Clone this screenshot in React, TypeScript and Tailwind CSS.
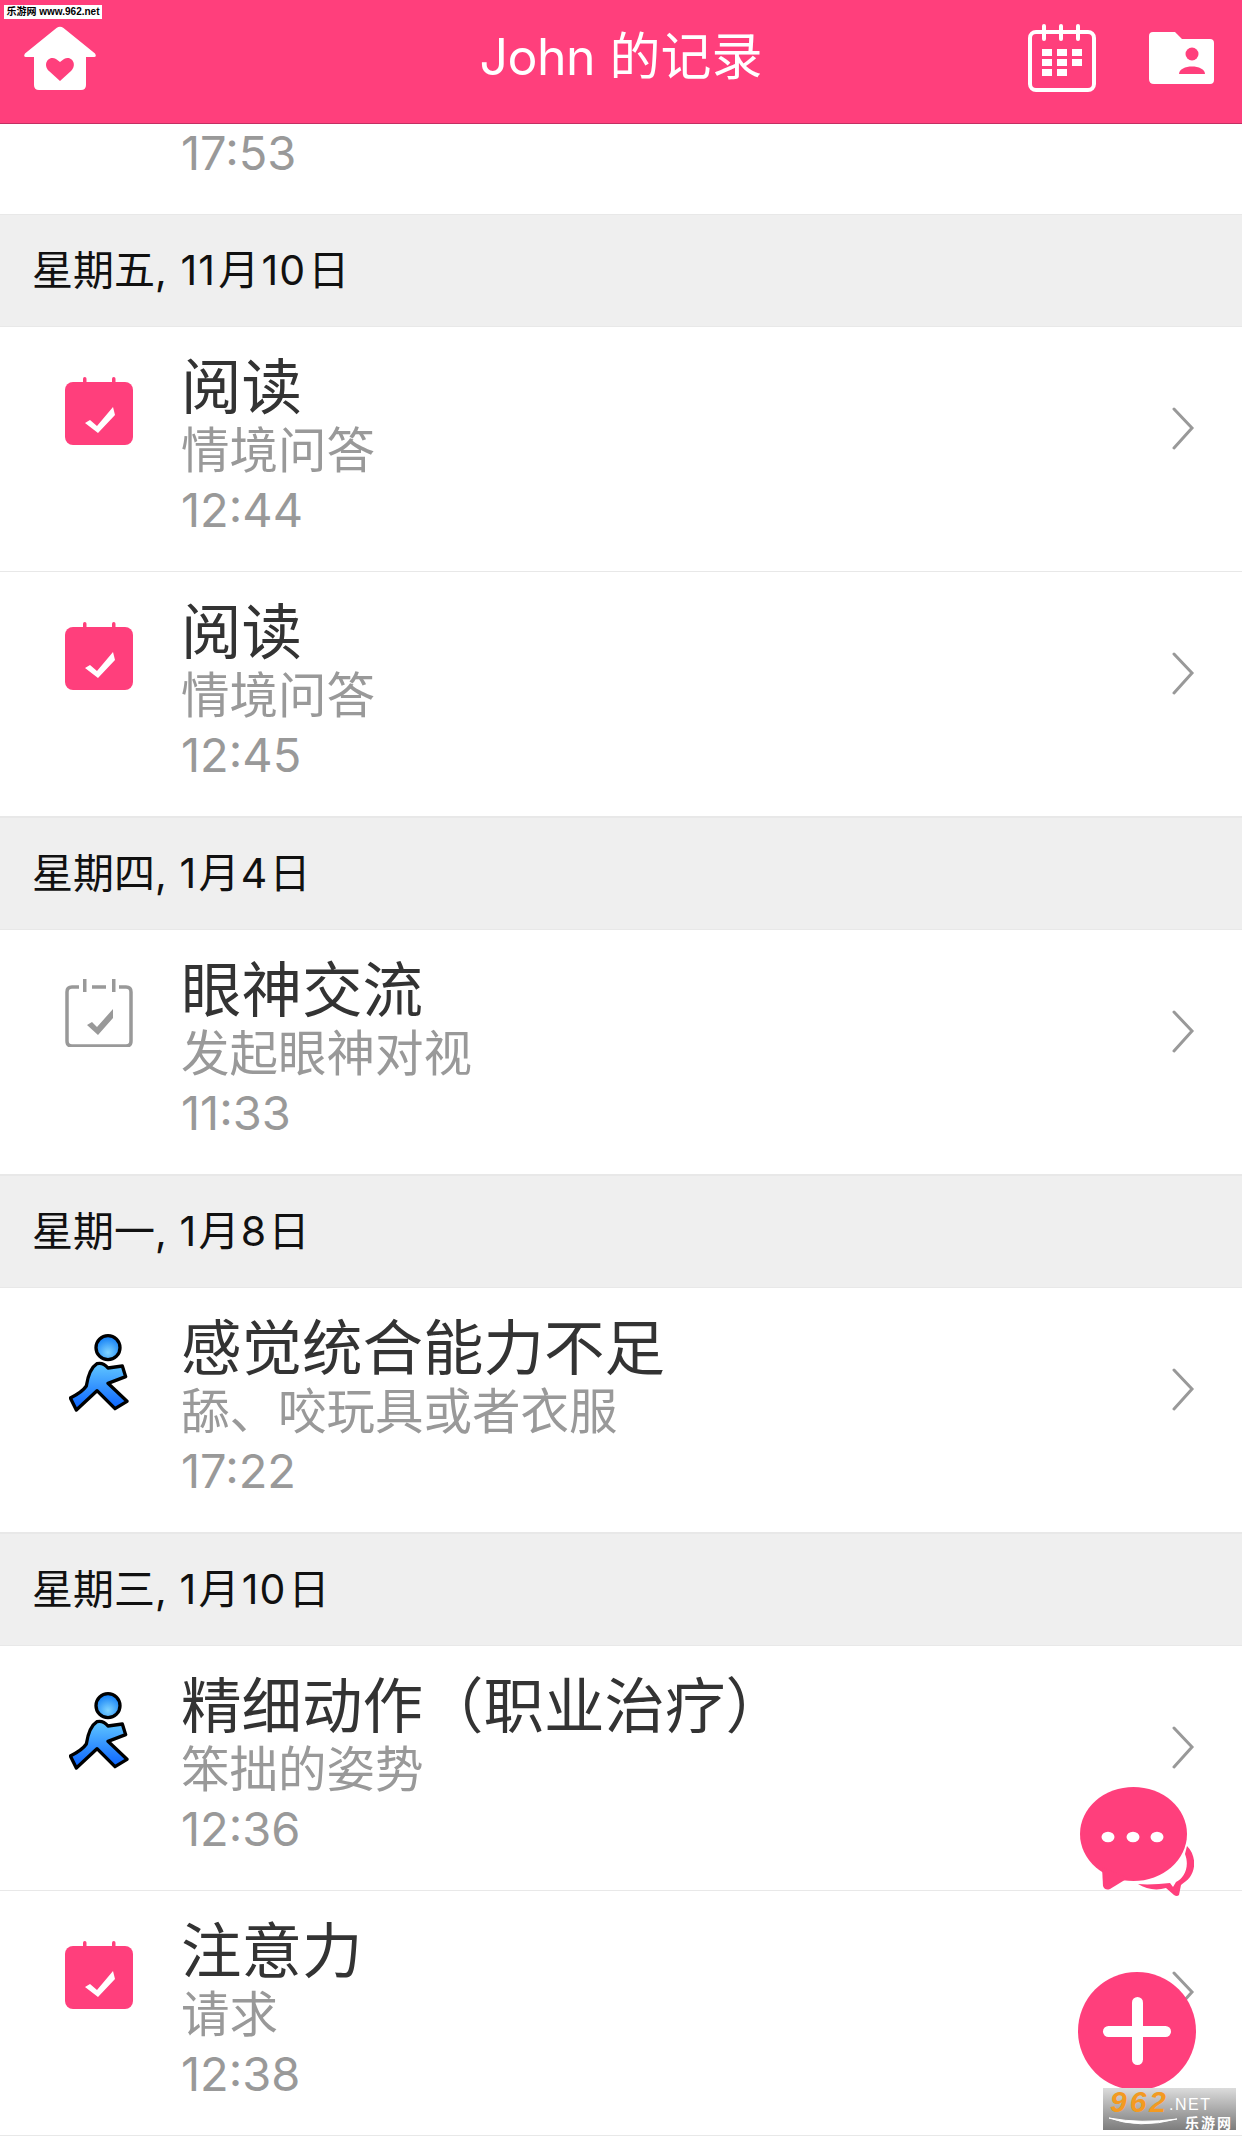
import React from "react";

const PINK = "#ff3f7c";
const CJK = "font-['Inter','Noto_Sans_CJK_SC',sans-serif]";

function HomeIcon() {
  return (
    <svg width="72" height="64" viewBox="24 23 72 64">
      <path
        fill="#fff"
        d="M56.5 25 Q60 22.5 63.5 25 L95 50.5 Q97 54 94 54 L86 54 L86 82 Q86 87 81 87 L39 87 Q34 87 34 82 L34 54 L26 54 Q23 54 25 50.5 Z"
      />
      <path
        fill={PINK}
        d="M60 78 L49 68 C42 61 49 52 56 56 L60 59 L64 56 C71 52 78 61 71 68 Z"
      />
    </svg>
  );
}

function CalendarGridIcon() {
  const cells = [
    [14, 25], [29, 25], [44, 25],
    [14, 35], [29, 35], [44, 35],
    [14, 45], [29, 45],
  ];
  return (
    <svg width="68" height="68" viewBox="0 0 68 68">
      <rect x="2" y="8" width="64" height="58" rx="6" fill="none" stroke="#fff" strokeWidth="4" />
      {[16, 33, 50].map((x) => (
        <rect key={x} x={x - 2} y="0" width="4" height="17" rx="2" fill="#fff" />
      ))}
      {cells.map(([x, y]) => (
        <rect key={`${x}-${y}`} x={x} y={y} width="10" height="7" fill="#fff" />
      ))}
    </svg>
  );
}

function FolderIcon() {
  return (
    <svg width="65" height="52" viewBox="0 0 65 52">
      <path
        fill="#fff"
        d="M4 0 L26 0 L33 7 L61 7 Q65 7 65 11 L65 48 Q65 52 61 52 L5 52 Q0 52 0 47 L0 4 Q0 0 4 0 Z"
      />
      <circle cx="43" cy="22" r="6.5" fill={PINK} />
      <path fill={PINK} d="M30 42 C30 32 56 32 56 42 Z" />
    </svg>
  );
}

function ChevronIcon() {
  return (
    <svg width="24" height="44" viewBox="0 0 24 44" className="shrink-0">
      <path d="M3 2 L21 21 L3 41" fill="none" stroke="#999" strokeWidth="3" strokeLinecap="round" strokeLinejoin="miter" />
    </svg>
  );
}

function PinkCalendar() {
  return (
    <svg width="68" height="68" viewBox="0 0 68 68">
      <rect x="0" y="5" width="68" height="63" rx="8" fill={PINK} />
      <rect x="18" y="0" width="3.5" height="8" rx="1.7" fill={PINK} />
      <rect x="47" y="0" width="3.5" height="8" rx="1.7" fill={PINK} />
      <path fill="#fff" d="M20 46 L25 43 L32 49 L48 30 L50 38 L33 56 Z" />
    </svg>
  );
}

function GreyCalendar() {
  return (
    <svg width="68" height="68" viewBox="0 0 68 68">
      <path
        d="M14 8 L7 8 Q2 8 2 13 L2 62 Q2 67 7 67 L61 67 Q66 67 66 62 L66 13 Q66 8 61 8 L54 8 M27 8 L41 8"
        fill="none"
        stroke="#999"
        strokeWidth="3.5"
      />
      <rect x="18" y="0" width="3.5" height="13" fill="#999" />
      <rect x="47" y="0" width="3.5" height="13" fill="#999" />
      <path fill="#999" d="M22 46 L27 43 L32 48 L48 30 L48 39 L33 56 Z" />
    </svg>
  );
}

function Runner({ id }: { id: string }) {
  return (
    <svg width="60" height="78" viewBox="88 66 180 234">
      <defs>
        <radialGradient id={`head-${id}`} cx="0.5" cy="0.7" r="0.7">
          <stop offset="0" stopColor="#7fd4ff" />
          <stop offset="1" stopColor="#0a78f5" />
        </radialGradient>
        <linearGradient id={`body-${id}`} x1="0" y1="0" x2="0" y2="1">
          <stop offset="0" stopColor="#62c8ff" />
          <stop offset="1" stopColor="#0860ff" />
        </linearGradient>
      </defs>
      <circle cx="205" cy="107" r="36" fill={`url(#head-${id})`} stroke="#000" strokeWidth="10" />
      <path
        d="M172 155 Q190 150 205 168 L248 162 L258 194 L205 214 L262 268 L226 290 L172 236 L110 294 L92 258 Q128 240 140 222 Q148 170 172 155 Z"
        fill={`url(#body-${id})`}
        stroke="#000"
        strokeWidth="10"
        strokeLinejoin="round"
      />
    </svg>
  );
}

function ChatFab() {
  return (
    <svg width="114" height="110" viewBox="0 0 114 110">
      <ellipse cx="53.5" cy="47" rx="53.5" ry="47" fill={PINK} />
      <path fill={PINK} d="M22 80 L23 99 Q25 104 30 102 L48 91 Z" />
      <ellipse cx="28" cy="50" rx="6.5" ry="5.2" fill="#fff" />
      <ellipse cx="53" cy="50" rx="6.5" ry="5.2" fill="#fff" />
      <ellipse cx="77" cy="50" rx="6.5" ry="5.2" fill="#fff" />
      <path
        fill={PINK}
        d="M107 59 C116 68 116 82 110 90 C107 94 103 96 101 98 L99 108 Q97 110 94 108 L86 101 C76 104 66 102 58 97 C68 98 80 97 90 96 L93 100 L96 95 C104 91 110 80 105 67 Z"
      />
    </svg>
  );
}

type RowData = { icon: "pink" | "grey" | "run"; title: string; sub: string; time: string };

function Row({ row, id }: { row: RowData; id: string }) {
  return (
    <div className="flex h-[245px] border-b border-[#e8e8e8] bg-white">
      <div className="flex w-[181px] shrink-0 pl-[65px]">
        {row.icon === "pink" && <div className="mt-[50px]"><PinkCalendar /></div>}
        {row.icon === "grey" && <div className="mt-[49px]"><GreyCalendar /></div>}
        {row.icon === "run" && <div className="ml-[4px] mt-[46px]"><Runner id={id} /></div>}
      </div>
      <div className="flex-1 pt-[27px]">
        <div className={`${CJK} text-[60.5px] leading-[66px] text-[#333]`}>{row.title}</div>
        <div className={`${CJK} text-[48.5px] leading-[62px] text-[#999]`}>{row.sub}</div>
        <div className={`${CJK} text-[47px] leading-[56px] text-[#999]`}>{row.time}</div>
      </div>
      <div className="mr-[47px] mt-[80px]">
        <ChevronIcon />
      </div>
    </div>
  );
}

function N1({ children }: { children: React.ReactNode }) {
  return <span className="mx-[1.25px] tracking-[1px]">{children}</span>;
}

function N2({ children }: { children: React.ReactNode }) {
  return <span className="mx-[2.25px] tracking-[1px]">{children}</span>;
}

function Section({ children }: { children: React.ReactNode }) {
  return (
    <div className={`${CJK} flex h-[113px] items-center whitespace-pre border-y border-[#e8e8e8] bg-[#efefef] pl-[32px] text-[41px] text-[#111]`}>
      {children}
    </div>
  );
}

const read = (time: string): RowData => ({ icon: "pink", title: "阅读", sub: "情境问答", time });

export default function App() {
  return (
    <div className="relative h-[2136px] w-[1242px] overflow-hidden bg-white">
      <header className="flex h-[124px] items-center border-b border-[#c22f63] bg-[#ff3f7c] pb-[8px]">
        <div className="w-[250px] pl-[24px]">
          <HomeIcon />
        </div>
        <div className={`${CJK} flex-1 text-center text-[51px] text-white`}>
          <span className="text-[50px] tracking-[-0.5px]">John</span> 的记录
        </div>
        <div className="flex w-[250px] items-center justify-end gap-[53px] pr-[28px]">
          <CalendarGridIcon />
          <FolderIcon />
        </div>
      </header>

      <div className={`${CJK} h-[90px] bg-white pl-[181px] text-[47px] leading-[58px] text-[#999]`}>17:53</div>

      <Section>星期五, <N2>11</N2>月<N2>10</N2>日</Section>
      <Row id="a" row={read("12:44")} />
      <Row id="b" row={read("12:45")} />
      <Section>星期四, <N1>1</N1>月<N1>4</N1>日</Section>
      <Row id="c" row={{ icon: "grey", title: "眼神交流", sub: "发起眼神对视", time: "11:33" }} />
      <Section>星期一, <N1>1</N1>月<N1>8</N1>日</Section>
      <Row id="d" row={{ icon: "run", title: "感觉统合能力不足", sub: "舔、咬玩具或者衣服", time: "17:22" }} />
      <Section>星期三, <N1>1</N1>月<N2>10</N2>日</Section>
      <Row id="e" row={{ icon: "run", title: "精细动作（职业治疗）", sub: "笨拙的姿势", time: "12:36" }} />
      <Row id="f" row={{ icon: "pink", title: "注意力", sub: "请求", time: "12:38" }} />

      {/* Overlays */}
      <div className="absolute left-[1080px] top-[1787px]">
        <ChatFab />
      </div>
      <div className="absolute left-[1078px] top-[1972px] flex h-[118px] w-[118px] items-center justify-center rounded-full bg-[#ff3f7c]">
        <div className="absolute h-[11px] w-[68px] rounded-full bg-white" />
        <div className="absolute h-[68px] w-[11px] rounded-full bg-white" />
      </div>

      <div className="absolute left-[4px] top-[5px] flex h-[14px] w-[98px] items-center justify-center whitespace-nowrap bg-white font-['Liberation_Sans','Noto_Sans_CJK_SC',sans-serif] text-[10px] font-bold leading-none text-black">
        乐游网 www.962.net
      </div>

      <div className="absolute left-[1103px] top-[2088px] h-[42px] w-[133px] bg-gradient-to-b from-[#dcdcdc] to-[#7d7d7d]">
        <div className="flex h-[27px] items-end whitespace-nowrap pl-[7px]">
          <span className="font-['Liberation_Sans',sans-serif] text-[30px] font-bold italic leading-[27px] tracking-[3px] text-[#f39a21]">962</span>
          <span className="font-['Liberation_Sans',sans-serif] text-[16px] leading-[21px] tracking-[1.5px] text-white">.NET</span>
        </div>
        <div className="flex items-start justify-between pl-[6px] pr-[3px]">
          <svg width="68" height="12" viewBox="0 0 68 12">
            <path d="M0 3 Q30 14 68 4 Q32 9 0 3 Z" fill="#fff" stroke="#fff" strokeWidth="1" />
          </svg>
          <span className="font-['Noto_Sans_CJK_SC',sans-serif] text-[14px] font-bold leading-[15px] tracking-[2px] text-white">乐游网</span>
        </div>
      </div>
    </div>
  );
}
